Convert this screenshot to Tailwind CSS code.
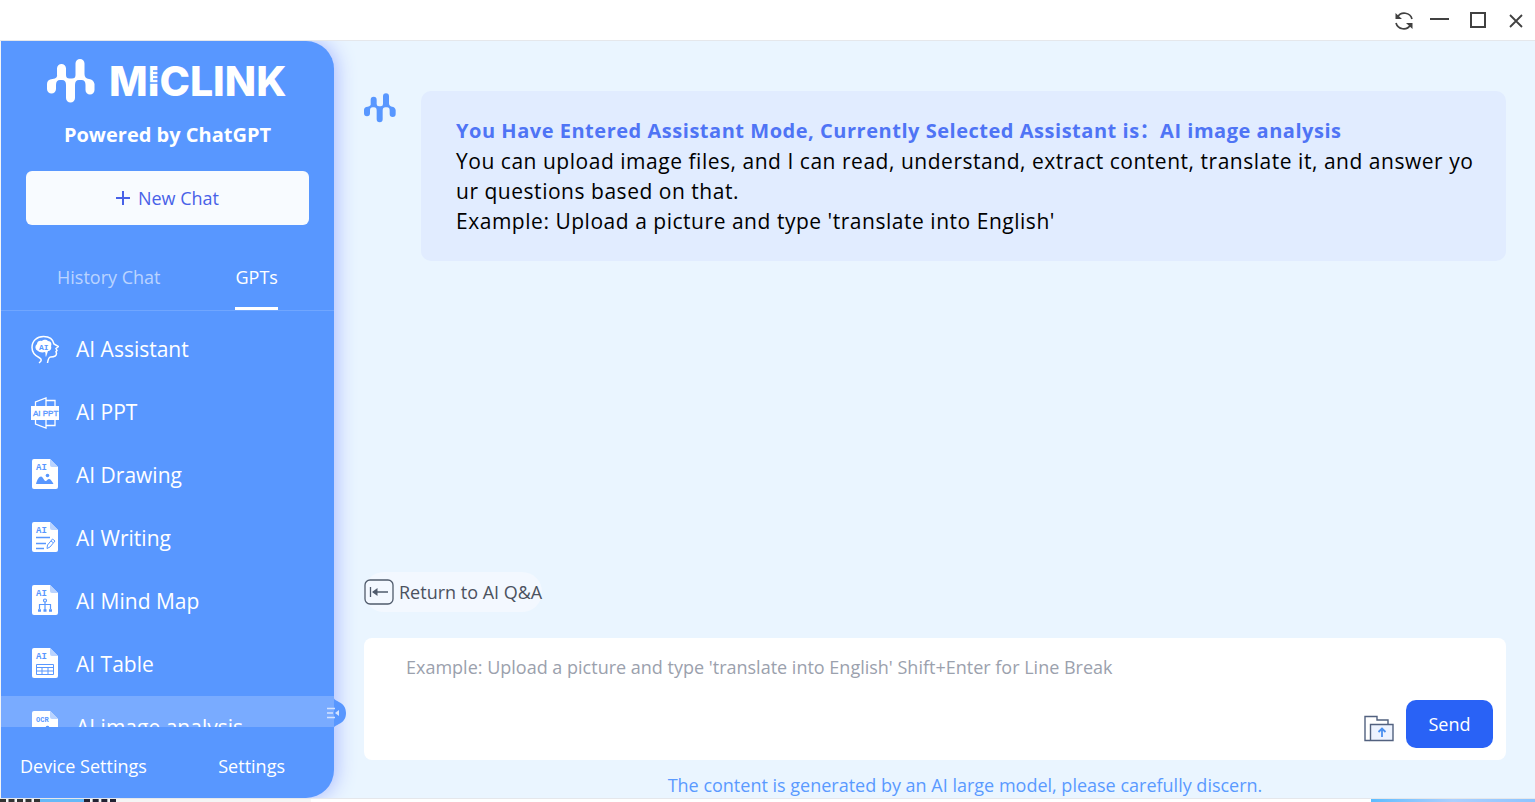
<!DOCTYPE html>
<html lang="en">
<head>
  <meta charset="UTF-8">
  <meta name="viewport" content="width=device-width, initial-scale=1.0">
  <title>Miclink</title>
  <script src="https://cdn.jsdelivr.net/npm/@tailwindcss/browser@4"></script>
</head>
<body class="bg-white font-['Open_Sans','Noto_Sans_CJK_SC',sans-serif]">
  <!-- Shared icon shapes -->
  <svg class="hidden">
    <symbol id="mark" viewBox="0 0 48 44">
      <path d="M10 9.500a4.500 4.500 0 0 1 9 0V16q0 3.500 3.500 3.500h2.500q3.500 0 3.500-3.500V4.500a4.500 4.500 0 0 1 9 0V15q0 4.500 4.500 5t5.500 5V31a4.500 4.500 0 0 1-9 0v-5q0-5-4-5h-2.500q-4 0-4 5V39a4.500 4.500 0 0 1-9 0V26q0-5-4-5h-2q-4 0-4 5v4a4.500 4.500 0 0 1-9 0v-5q0-4.500 5.500-5t4.500-5z" fill="currentColor"/>
    </symbol>
    <symbol id="page" viewBox="0 0 26 30">
      <path d="M2 0h16l8 8v20a2 2 0 0 1-2 2H2a2 2 0 0 1-2-2V2a2 2 0 0 1 2-2z" fill="#fff"/>
      <path d="M18 0l8 8h-6a2 2 0 0 1-2-2z" fill="#b9d3ff"/>
    </symbol>
  </svg>

  <div class="flex flex-col h-screen overflow-hidden">
    <!-- Title bar -->
    <header class="flex shrink-0 items-center justify-end gap-4 h-[41px] pt-px pr-[9px] border-b border-gray-200 text-[#414141]">
      <button title="Refresh">
        <svg class="w-5 h-5" viewBox="0 0 20 20" fill="none" stroke="currentColor" stroke-width="1.700">
          <path d="M3.500 6A8 8 0 0 1 18 8M16.500 14A8 8 0 0 1 2 12"/>
          <path d="M1.500 2v6H8zM18.500 18v-6H12z" fill="currentColor" stroke="none"/>
        </svg>
      </button>
      <button title="Minimize">
        <svg class="w-5 h-5" viewBox="0 0 20 20" stroke="currentColor" stroke-width="2"><path d="M0 8h19"/></svg>
      </button>
      <button title="Maximize" class="pl-0.5">
        <svg class="w-5 h-5" viewBox="0 0 20 20" fill="none" stroke="currentColor" stroke-width="2"><path d="M3 2h14v14H3z"/></svg>
      </button>
      <button title="Close" class="pl-0.5">
        <svg class="w-5 h-5" viewBox="0 0 20 20" stroke="currentColor" stroke-width="1.800"><path d="M4 4l12 12M16 4L4 16"/></svg>
      </button>
    </header>

    <div class="flex flex-1 min-h-0 overflow-hidden bg-[#eaf5ff]">
      <!-- Sidebar -->
      <aside class="relative flex flex-col shrink-0 w-[334px] border-l border-gray-100 rounded-r-[28px] bg-[#5897ff] text-white shadow-[2px_0_20px_#a9b9ff]">
        <div class="flex items-center gap-4 pt-[18px] pl-[46px]">
          <svg class="w-12 h-11"><use href="#mark"/></svg>
          <svg class="w-[190px] h-11 overflow-visible" viewBox="0 0 190 44">
            <text x="-2" y="37" class="font-['Inter'] font-extrabold text-[41px]" fill="#fff">MICLINK</text>
            <!-- ruler ticks cut into the first I -->
            <path d="M42 12h6M42 16h6M42 20h6M37 24h11" stroke="#5897ff" stroke-width="1.500"/>
          </svg>
        </div>
        <p class="mt-[17px] mb-[21px] text-center text-[20px] leading-[30px] font-bold">Powered by ChatGPT</p>
        <button class="flex items-center justify-center gap-2 mx-[25px] h-[54px] rounded-md bg-[#f8fbff] text-[18px] text-[#4861e8]">
          <svg class="w-[14px] h-[14px]" viewBox="0 0 14 14" stroke="currentColor" stroke-width="2"><path d="M7 0v14M0 7h14"/></svg>
          New Chat
        </button>

        <nav class="flex shrink-0 items-end mt-[22px] h-16 border-b border-white/15 text-[18px]">
          <button class="ml-14 h-full border-b-3 border-transparent text-white/60">History Chat</button>
          <button class="ml-[75px] h-full border-b-3 border-white">GPTs</button>
        </nav>

        <ul class="flex-1 min-h-0 overflow-hidden pt-[7px] text-[21px]">
          <li class="flex items-center gap-[17px] h-[63px] pl-[30px]">
            <svg class="w-7 h-[30px]" viewBox="0 0 28 30" fill="none" stroke="#fff" stroke-width="1.500">
              <path d="M8 28c3-2 3-4 0-5.500C3 20 1 16.500 1 12.500 1 6 6 1.500 12.500 1.500 18 1.500 22 4 23 9l4.500 2.500-2.500 2 1 2-1 1 .5 2c0 3-3 3.500-6 3.500-2 0-2.500 3-3 6"/>
              <path d="M7 16a4 4 0 0 1-1-7c0-3 3-4 5-3 2-2 5-1 6 0 3 0 4 3 3 5 1 3-1 5-3 5l-2 6c-1-1 0-4-1-5-3 1-6 0-7-1z" fill="#fff" stroke="none"/>
              <text x="8" y="15" class="font-['Liberation_Mono'] text-[8px] font-bold" fill="#5897ff" stroke="none">AI</text>
            </svg>
            AI Assistant
          </li>
          <li class="flex items-center gap-[17px] h-[63px] pl-[30px]">
            <svg class="w-7 h-8" viewBox="0 0 28 32" fill="none" stroke="#fff" stroke-width="1.300">
              <path d="M4.500 9V5L15 1v30L4.500 27v-5M15 3.500h9V9M15 28.500h9V22"/>
              <path d="M0 9h28v14H0z" fill="#fff" stroke="none"/>
              <text x="2" y="19" class="font-['Liberation_Sans'] text-[8px]" fill="#5897ff" stroke="#5897ff" stroke-width="0.300">AI PPT</text>
            </svg>
            AI PPT
          </li>
          <li class="flex items-center gap-[18px] h-[63px] pl-[31px]">
            <svg class="w-[26px] h-[34px]" viewBox="0 0 26 34">
              <use href="#page" width="26" height="30"/>
              <text x="4" y="11" class="font-['Liberation_Mono'] text-[9px] font-bold" fill="#5897ff">AI</text>
              <path d="M4 25c1-4 3-7.500 5-7.500s3 4.500 4.500 4.500 2-2 3.500-2 3 2 4.500 5z" fill="#5897ff"/>
              <circle cx="15.500" cy="16.500" r="1.800" fill="#5897ff"/>
            </svg>
            AI Drawing
          </li>
          <li class="flex items-center gap-[18px] h-[63px] pl-[31px]">
            <svg class="w-[26px] h-[34px]" viewBox="0 0 26 34" fill="none" stroke="#5897ff" stroke-width="1.500">
              <use href="#page" width="26" height="30" stroke="none"/>
              <text x="4" y="11" class="font-['Liberation_Mono'] text-[9px] font-bold" fill="#5897ff" stroke="none">AI</text>
              <path d="M4 15.500h14M4 21.500h10M4 26.500h8"/>
              <path d="M15 26.500l.5-3.500 5-6 2.500 2-5 6zM19 19l2 1.500" stroke-width="1"/>
            </svg>
            AI Writing
          </li>
          <li class="flex items-center gap-[18px] h-[63px] pl-[31px]">
            <svg class="w-[26px] h-[34px]" viewBox="0 0 26 34" fill="none" stroke="#5897ff" stroke-width="1.200">
              <use href="#page" width="26" height="30" stroke="none"/>
              <text x="4" y="11" class="font-['Liberation_Mono'] text-[9px] font-bold" fill="#5897ff" stroke="none">AI</text>
              <circle cx="13" cy="15.500" r="1.500"/>
              <path d="M13 17v8M7.500 24v-4.500h11V24"/>
              <path d="M6 25.500h3M11.500 25.500h3M17 25.500h3" stroke-width="2.500"/>
            </svg>
            AI Mind Map
          </li>
          <li class="flex items-center gap-[18px] h-[63px] pl-[31px]">
            <svg class="w-[26px] h-[34px]" viewBox="0 0 26 34" fill="none" stroke="#5897ff">
              <use href="#page" width="26" height="30" stroke="none"/>
              <text x="4" y="11" class="font-['Liberation_Mono'] text-[9px] font-bold" fill="#5897ff" stroke="none">AI</text>
              <path d="M4.500 16.500h17v10h-17zM4.500 19.500h17M4.500 23h17M10 19.500v7M16 19.500v7"/>
            </svg>
            AI Table
          </li>
          <li class="flex items-center gap-[18px] h-[63px] pl-[31px] bg-white/20">
            <svg class="w-[26px] h-[34px]" viewBox="0 0 26 34">
              <use href="#page" width="26" height="30"/>
              <text x="4" y="11" class="font-['Liberation_Mono'] text-[7px] font-bold" fill="#5897ff">OCR</text>
              <path d="M4 25c1-4 3-7.500 5-7.500s3 4.500 4.500 4.500 2-2 3.500-2 3 2 4.500 5z" fill="#5897ff"/>
              <circle cx="15.500" cy="16.500" r="1.800" fill="#5897ff"/>
            </svg>
            AI image analysis
          </li>
        </ul>

        <div class="flex shrink-0 items-center justify-between h-[71px] pt-[7px] pl-[19px] pr-[49px] text-[18px]">
          <button>Device Settings</button>
          <button>Settings</button>
        </div>

        <!-- Collapse handle -->
        <button title="Collapse" class="absolute -right-3 bottom-[70px] w-5 h-[30px]">
          <svg class="w-5 h-[30px]" viewBox="0 0 20 30" fill="none">
            <path d="M8 0c0 4 12 3 12 15S8 26 8 30z" fill="#5897ff"/>
            <path d="M1 10.500h8M1 15h6M1 19.500h8" stroke="#d5e4ff" stroke-width="1.500"/>
            <path d="M13 12v6l-4-3z" fill="#d5e4ff"/>
          </svg>
        </button>
      </aside>

      <!-- Chat -->
      <main class="flex flex-col flex-1 min-w-0 pl-[30px] pr-[29px] pt-[50px]">
        <div class="flex items-start gap-[25px]">
          <svg class="shrink-0 w-8 h-[30px] mt-[2px] text-[#5897ff]"><use href="#mark"/></svg>
          <div class="flex-1 pl-[35px] pr-7 py-[25px] rounded-[10px] bg-[#e1ecff] text-[21px] leading-[30px] tracking-wide text-black break-all">
            <p class="text-[20px] leading-[30px] font-bold text-[#4f74f5]">You Have Entered Assistant Mode, Currently Selected Assistant is：AI image analysis</p>
            <p>You can upload image files, and I can read, understand, extract content, translate it, and answer yo<br>ur questions based on that.</p>
            <p>Example: Upload a picture and type 'translate into English'</p>
          </div>
        </div>

        <button class="flex items-center self-start gap-[5px] mt-auto h-10 rounded-full bg-[#f3f8ff] text-[18px] text-[#4b5260]">
          <svg class="w-[30px] h-[26px]" viewBox="0 0 30 26" fill="none" stroke="#505b6c" stroke-width="1.300">
            <rect x="1" y="1" width="28" height="24" rx="5"/>
            <path d="M6.500 8v10M9 13h15"/>
            <path d="M13.500 9v8L8 13z" fill="#505b6c" stroke="none"/>
          </svg>
          Return to AI Q&amp;A
        </button>

        <div class="flex mt-[26px] h-[122px] rounded-lg bg-white">
          <textarea aria-label="Message" class="flex-1 pt-4 pl-[42px] text-[18px] leading-[26px] resize-none outline-none placeholder:text-[#9ba1ad]" placeholder="Example: Upload a picture and type 'translate into English' Shift+Enter for Line Break"></textarea>
          <div class="flex items-end gap-3 pr-[13px] pb-3">
            <button title="Upload file" class="mb-1.5">
              <svg class="w-[30px] h-[27px]" viewBox="0 0 30 27" fill="none" stroke="#52617f" stroke-width="1.400">
                <path d="M6 25.500H1V1.500h12v3.500h11v4"/>
                <path d="M6.500 9.500H29v16H6.500z" fill="#edf3ff"/>
                <path d="M18 22v-8M14.500 17l3.500-3.500 3.500 3.500" stroke="#4a90f0" stroke-width="1.800"/>
              </svg>
            </button>
            <button class="w-[87px] h-12 rounded-[10px] bg-[#2962f6] text-[18px] text-white">Send</button>
          </div>
        </div>
        <p class="pt-[13px] pl-[60px] text-center text-[18px] leading-[25px] text-[#5a9aff]">The content is generated by an AI large model, please carefully discern.</p>
      </main>
    </div>

    <!-- Edge of the desktop below the window -->
    <div class="flex shrink-0 justify-between h-1 border-t border-gray-200 bg-white">
      <div class="flex w-[311px] bg-[#f5f5f5]">
        <div class="w-10 border-t-3 border-dashed border-[#333]"></div>
        <div class="w-11 bg-[#64b9f8]"></div>
        <div class="w-8 border-t-3 border-dashed border-[#223]"></div>
      </div>
      <div class="w-[164px] bg-linear-to-r from-[#5bbcff] via-[#aad0ff] to-[#8cc4ff]"></div>
    </div>
  </div>
</body>
</html>
